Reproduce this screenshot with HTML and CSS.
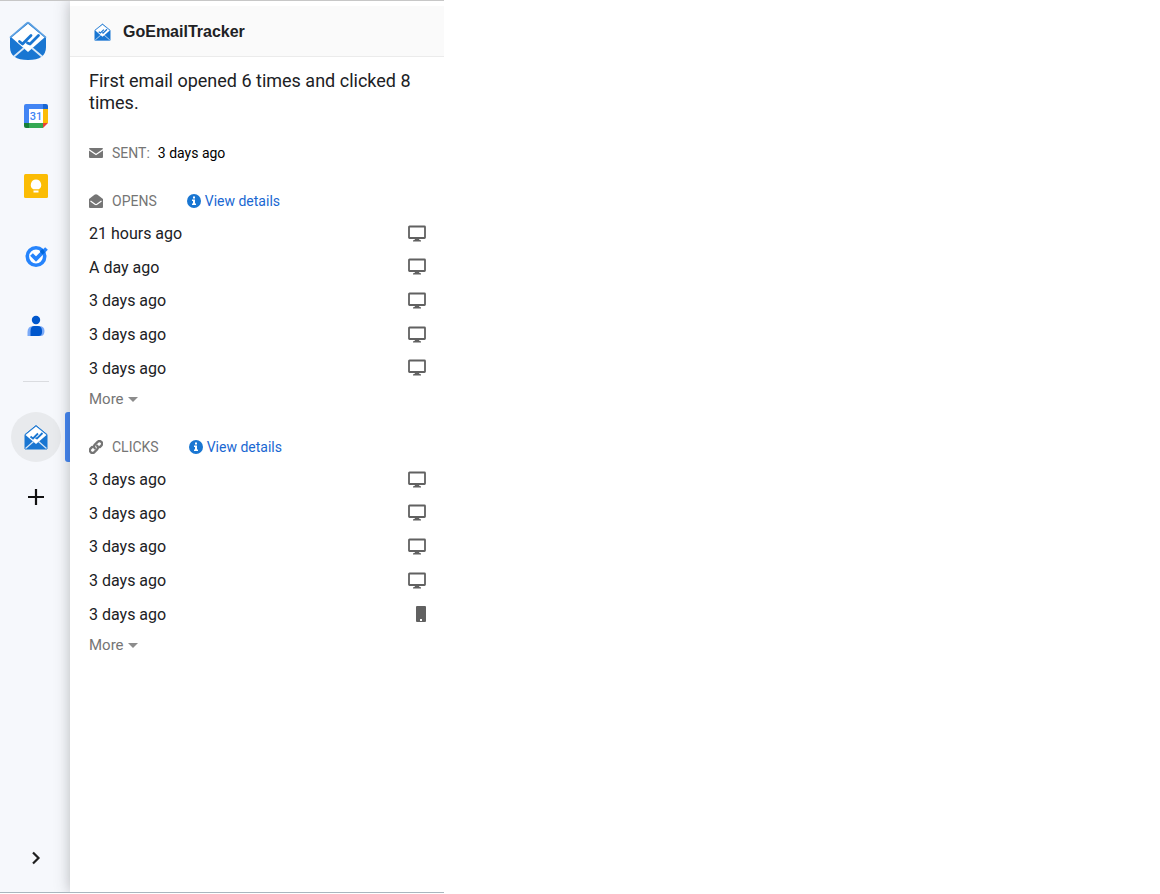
FILE: index.html
```html
<!DOCTYPE html>
<html lang="en">
<head>
    <meta charset="UTF-8">
    <meta name="viewport" content="width=device-width, initial-scale=1.0">
    <title>GoEmailTracker</title>
    <link rel="stylesheet" href="styles.css">
</head>
<body>
    <!-- shared icons -->
    <svg class="sprite" aria-hidden="true">
        <symbol id="envelope" viewBox="0 0 24 26">
            <path d="M1 10.5 L12 1.5 L23 10.5 V25 H1 Z" fill="#1976d2" stroke="#1976d2"/>
            <path d="M12 2.5 L22.500 11 L12 20 L1.500 11 Z" fill="#fff"/>
            <path d="M9.500 17.500 L1.500 24.500 M14.500 17.500 L22.500 24.500" stroke="#d5e6f7" stroke-width="1.200"/>
            <path d="M6.500 12.500 L9 14.500 L14 9.500 M11.500 14 L13 14.500 L18.500 9" fill="none" stroke="#1976d2" stroke-width="1.800"/>
        </symbol>
        <symbol id="desktop" viewBox="0 0 20 18">
            <path d="M2.5 1.5 H17.5 Q18 1.5 18 2 V12.500 Q18 13 17.5 13 H2.5 Q2 13 2 12.500 V2 Q2 1.5 2.5 1.5 Z" fill="none" stroke="#616161" stroke-width="1.8"/>
            <path d="M8 13 H12 V14.500 L14 15.500 V16.500 H6 V15.500 L8 14.500 Z" fill="#616161"/>
        </symbol>
        <symbol id="phone" viewBox="0 0 10 18">
            <path d="M1 1 H9 Q10 1 10 2 V16 Q10 17 9 17 H1 Q0 17 0 16 V2 Q0 1 1 1 Z" fill="#616161"/>
            <rect x="4" y="14" width="2" height="2" fill="#fff"/>
        </symbol>
        <symbol id="info" viewBox="0 0 14 14">
            <circle cx="7" cy="7" r="7" fill="#1976d2"/>
            <path d="M6 2.5 H8 V4.5 H6 Z M5 5.5 H8 V9.5 H9 V11 H5 V9.5 H6 V7 H5 Z" fill="#fff"/>
        </symbol>
    </svg>

    <div class="app">
        <nav class="sidebar" aria-label="Side panel">
            <a class="brand" href="#" aria-label="GoEmailTracker home">
                <svg width="38" height="40" viewBox="0 0 38 40">
                    <path d="M1 16 L17.5 2 Q19 1 20.5 2 L37 16 V26 Q37 39 19 39 Q1 39 1 26 Z" fill="#1976d2"/>
                    <path d="M1.5 17 V16 L17.5 2.3 Q19 1 20.5 2.3 L36.5 16 V17" fill="none" stroke="#64a5e3" stroke-width="1.5"/>
                    <path d="M19 2.8 L35.5 16.5 L19 31 L2.5 16.5 Z" fill="#fff"/>
                    <path d="M15 27 L5 35.5 M23 27 L33 35.5" stroke="#d9e9f8" stroke-width="1.8"/>
                    <path d="M10.5 20.5 L13.5 23 L22 14.5 M18.5 22 L21 23 L29.5 14.5" fill="none" stroke="#1976d2" stroke-width="2.8" stroke-linecap="round" stroke-linejoin="round"/>
                </svg>
            </a>
            <button class="side-btn" aria-label="Calendar">
                <svg width="24" height="24" viewBox="0 0 24 24">
                    <path d="M0 2 Q0 0 2 0 H19 V5 H5 V19 H0 Z" fill="#4285f4"/>
                    <path d="M19 0 H22 Q24 0 24 2 V5 H19 Z" fill="#1967d2"/>
                    <path d="M19 5 H24 V19 H19 Z" fill="#fbbc04"/>
                    <path d="M5 19 H19 V24 H5 Z" fill="#34a853"/>
                    <path d="M0 19 H5 V24 H2 Q0 24 0 22 Z" fill="#188038"/>
                    <path d="M19 19 H24 L19 24 Z" fill="#ea4335"/>
                    <rect x="5" y="5" width="14" height="14" fill="#fff"/>
                    <text x="12" y="16" class="cal-day">31</text>
                </svg>
            </button>
            <button class="side-btn" aria-label="Keep">
                <svg width="24" height="24" viewBox="0 0 24 24">
                    <rect width="24" height="24" rx="1.5" fill="#fbbc04"/>
                    <path d="M12 5.500 A5.3 5.3 0 0 1 14.700 15.300 H9.300 A5.3 5.3 0 0 1 12 5.500 Z M9.500 16.500 H14.500 V18.500 H9.500 Z" fill="#fff"/>
                </svg>
            </button>
            <button class="side-btn" aria-label="Tasks">
                <svg width="24" height="24" viewBox="0 0 24 24">
                    <circle cx="12" cy="12.5" r="8.700" fill="#fff" stroke="#2684fc" stroke-width="3.600"/>
                    <path d="M7.500 10.500 L12 15 L22.500 4.500" fill="none" stroke="#2684fc" stroke-width="3.800"/>
                    <path d="M15.800 7.500 L18.300 5 Q20.300 6.300 21 8.500 L18.500 10.500 Z" fill="#0066da"/>
                </svg>
            </button>
            <button class="side-btn" aria-label="Contacts">
                <svg width="24" height="24" viewBox="0 0 24 24">
                    <circle cx="12" cy="6" r="4.200" fill="#0057cc"/>
                    <path d="M3.500 22 V18 Q3.500 12 9.500 12 H14.500 Q20.500 12 20.500 17 Q20.500 22 16.500 22 Z" fill="#7baaf7"/>
                    <path d="M6.500 22 V17 Q6.500 12 10.500 12 H13.500 Q18 12 18 17 V18 Q18 22 14.500 22 Z" fill="#0057cc"/>
                </svg>
            </button>
            <hr class="divider">
            <button class="side-btn active" aria-label="GoEmailTracker">
                <svg width="24" height="26"><use href="#envelope"/></svg>
            </button>
            <button class="side-btn add" aria-label="Get add-ons">
                <svg width="18" height="18" viewBox="0 0 18 18">
                    <path d="M9 1 V17 M1 9 H17" stroke="#111" stroke-width="2.2"/>
                </svg>
            </button>
            <button class="side-btn collapse" aria-label="Hide side panel">
                <svg width="12" height="14" viewBox="0 0 12 14">
                    <path d="M3 1.5 L8.5 7 L3 12.5" fill="none" stroke="#1f1f1f" stroke-width="2.2"/>
                </svg>
            </button>
        </nav>

        <main class="panel">
            <header class="panel-header">
                <svg width="17" height="18"><use href="#envelope"/></svg>
                <h1>GoEmailTracker</h1>
            </header>

            <div class="content">
                <h2>First email opened 6 times and clicked 8 times.</h2>

                <div class="section-title sent">
                    <svg class="title-icon" viewBox="0 0 14 14">
                        <path d="M1 2 H13 Q14 2 14 3 L7 7.8 L0 3 Q0 2 1 2 Z" fill="#757575"/>
                        <path d="M0 4.5 L7 9.2 L14 4.5 V11 Q14 12 13 12 H1 Q0 12 0 11 Z" fill="#757575"/>
                    </svg>
                    <span>SENT:</span>
                    <span class="sent-time">3 days ago</span>
                </div>

                <section>
                    <div class="section-title">
                        <svg class="title-icon" viewBox="0 0 14 14">
                            <path d="M0 5 L5.5 .8 Q7 -.3 8.5 .8 L14 5 V13 Q14 14 13 14 H1 Q0 14 0 13 Z" fill="#757575"/>
                            <path d="M1.5 7 L6 10.2 Q7 10.9 8 10.2 L12.5 7" fill="none" stroke="#fff" stroke-width="1.2"/>
                        </svg>
                        <span>OPENS</span>
                        <a class="details" href="#"><svg width="14" height="14"><use href="#info"/></svg>View details</a>
                    </div>
                    <ul class="events">
                        <li>21 hours ago <svg width="20" height="18"><use href="#desktop"/></svg></li>
                        <li>A day ago <svg width="20" height="18"><use href="#desktop"/></svg></li>
                        <li>3 days ago <svg width="20" height="18"><use href="#desktop"/></svg></li>
                        <li>3 days ago <svg width="20" height="18"><use href="#desktop"/></svg></li>
                        <li>3 days ago <svg width="20" height="18"><use href="#desktop"/></svg></li>
                    </ul>
                    <button class="more">More <span class="caret"></span></button>
                </section>

                <section>
                    <div class="section-title">
                        <svg class="title-icon" viewBox="0 0 14 14">
                            <g fill="none" stroke="#757575" stroke-width="2.3" stroke-linecap="round">
                                <path d="M5.8 8.3 A2.8 2.8 0 0 1 5.9 4.6 L8.6 1.9 A2.6 2.6 0 0 1 12.3 5.6 L10.8 7.1"/>
                                <path d="M8.2 5.7 A2.8 2.8 0 0 1 8.1 9.4 L5.4 12.1 A2.6 2.6 0 0 1 1.7 8.4 L3.2 6.9"/>
                            </g>
                        </svg>
                        <span>CLICKS</span>
                        <a class="details" href="#"><svg width="14" height="14"><use href="#info"/></svg>View details</a>
                    </div>
                    <ul class="events">
                        <li>3 days ago <svg width="20" height="18"><use href="#desktop"/></svg></li>
                        <li>3 days ago <svg width="20" height="18"><use href="#desktop"/></svg></li>
                        <li>3 days ago <svg width="20" height="18"><use href="#desktop"/></svg></li>
                        <li>3 days ago <svg width="20" height="18"><use href="#desktop"/></svg></li>
                        <li>3 days ago <svg class="phone" width="10" height="18"><use href="#phone"/></svg></li>
                    </ul>
                    <button class="more">More <span class="caret"></span></button>
                </section>
            </div>
        </main>
    </div>
</body>
</html>
```
FILE: styles.css
```css
* {
    box-sizing: border-box;
}

body {
    margin: 0;
    background: #fff;
    color: #202124;
    font-family: Roboto, "Liberation Sans", sans-serif;
}

h1, h2, ul {
    margin: 0;
    padding: 0;
}

svg {
    display: block;
    flex-shrink: 0;
}

button {
    border: none;
    padding: 0;
    background: none;
    font-family: inherit;
    cursor: pointer;
}

.sprite {
    position: absolute;
    width: 0;
    height: 0;
}

.app {
    display: flex;
    width: 100%;
    max-width: 444px;
    min-height: calc(100vh - 1px);
    border-top: 1px solid #c7c7c7;
    border-bottom: 1px solid #a9b6be;
    overflow: hidden;
}

/* sidebar */
.sidebar {
    display: flex;
    flex-direction: column;
    gap: 20px;
    width: 70px;
    padding: 20px 0 9px 11px;
    background: #f6f8fc;
}

.brand {
    margin-left: -2px;
    margin-bottom: 10px;
}

.side-btn {
    position: relative;
    display: flex;
    align-items: center;
    justify-content: center;
    width: 50px;
    height: 50px;
    border-radius: 50%;
}

.cal-day {
    font-size: 11px;
    font-weight: 500;
    text-anchor: middle;
    fill: #4285f4;
}

.divider {
    width: 26px;
    margin: 10px 0 10px 12px;
    border: none;
    border-top: 1px solid #dadce0;
}

.active {
    background: #e8eaed;
}

.active::after {
    content: "";
    position: absolute;
    left: 54px;
    top: 0;
    width: 5px;
    height: 50px;
    border-radius: 3px 0 0 3px;
    background: #4285f4;
}

.add {
    margin-top: -10px;
}

.collapse {
    margin-top: auto;
}

/* panel */
.panel {
    flex: 1;
    padding-top: 5px;
    background: #fff;
    box-shadow: 0 0 14px rgba(60, 64, 67, 0.35);
    z-index: 1;
}

.panel-header {
    display: flex;
    align-items: center;
    gap: 12px;
    height: 51px;
    padding-top: 1px;
    padding-left: 24px;
    background: #fafafa;
    border-bottom: 1px solid #ebebeb;
}

h1 {
    font-family: "Liberation Sans", Arial, sans-serif;
    font-size: 16px;
    font-weight: bold;
}

.content {
    padding: 13px 17px 0 19px;
}

h2 {
    margin-bottom: 28px;
    font-size: 18px;
    font-weight: 400;
    line-height: 22px;
}

.section-title {
    display: flex;
    align-items: center;
    height: 22px;
    color: #757575;
    font-size: 14px;
}

.title-icon {
    width: 14px;
    height: 14px;
    margin-right: 9px;
}

.sent {
    margin-bottom: 26px;
}

.sent-time {
    margin-left: 8px;
    color: #000;
}

.details {
    display: flex;
    align-items: center;
    gap: 4px;
    margin-left: 30px;
    color: #1967d2;
    text-decoration: none;
}

.details:hover {
    text-decoration: underline;
}

.events {
    display: grid;
    min-height: 168px;
    margin-top: 5px;
    font-size: 16px;
    list-style: none;
}

.events li {
    display: flex;
    align-items: center;
    justify-content: space-between;
}

.events .phone {
    margin-right: 1px;
}

.more {
    display: flex;
    align-items: center;
    gap: 4px;
    height: 28px;
    margin-bottom: 23px;
    color: #757575;
    font-size: 15px;
}

.caret {
    border-top: 5px solid #8c8c8c;
    border-left: 5px solid transparent;
    border-right: 5px solid transparent;
}
```
